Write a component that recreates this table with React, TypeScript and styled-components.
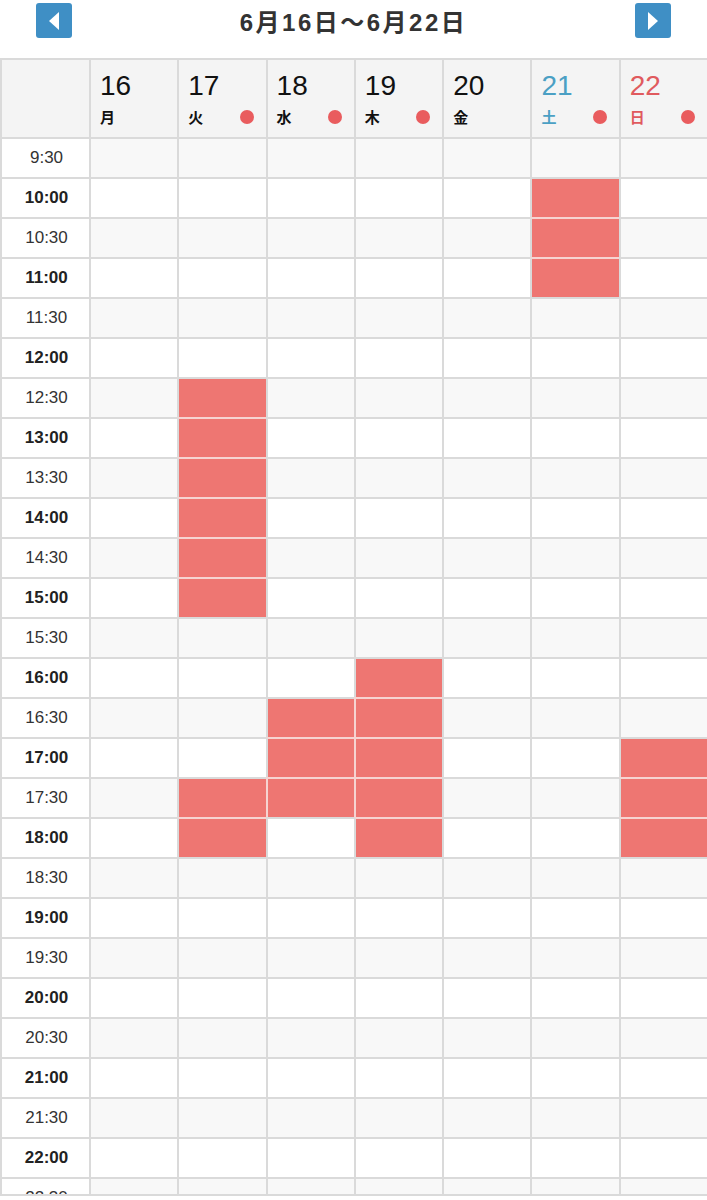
import React from "react";
import styled, { createGlobalStyle } from "styled-components";

const GlobalStyle = createGlobalStyle`
  html, body { margin: 0; padding: 0; background: #ffffff; }
  body { font-family: "Liberation Sans", "Noto Sans CJK JP", sans-serif; color: #222; }
  * { box-sizing: border-box; }
`;

const LINE = "#dadada";
const RED = "#ee7672";
const RED_LINE = "#f6d3d1";

const Page = styled.div`
  width: 707px;
`;

const TopBar = styled.div`
  height: 58px;
  display: flex;
  align-items: flex-start;
  justify-content: space-between;
  padding: 3px 36px 0 36px;
`;

const NavButton = styled.button`
  width: 36px;
  height: 35px;
  border: none;
  border-radius: 3px;
  background: #3f8fc5;
  padding: 0;
  display: flex;
  align-items: center;
  justify-content: center;
  cursor: pointer;
`;

const Title = styled.h1`
  margin: 0;
  padding-top: 5px;
  font-family: "Liberation Sans", "Noto Sans CJK JP", sans-serif;
  font-weight: 700;
  font-size: 24px;
  line-height: 30px;
  color: #333;
  letter-spacing: 2.5px;
`;

const Table = styled.div`
  height: 1138px;
  overflow: hidden;
  border-top: 2px solid ${LINE};
  border-bottom: 2px solid ${LINE};
`;

const Row = styled.div<{ $header?: boolean }>`
  display: grid;
  grid-template-columns: 89px repeat(7, 1fr);
  height: ${(p) => (p.$header ? "77px" : "40px")};
`;

const Corner = styled.div`
  background: #f4f4f4;
  border-left: 2px solid ${LINE};
`;

const DayHead = styled.div<{ $color: string }>`
  background: #f4f4f4;
  border-left: 2px solid ${LINE};
  padding: 10px 12px 0 9px;
  display: flex;
  flex-direction: column;
  color: ${(p) => p.$color};
`;

const DayNum = styled.div`
  font-family: "Liberation Sans", sans-serif;
  font-size: 28px;
  line-height: 32px;
  font-weight: 400;
`;

const DayNameRow = styled.div`
  display: flex;
  align-items: center;
  justify-content: space-between;
  margin-top: 6px;
  height: 18px;
`;

const DayName = styled.span`
  font-family: "Noto Sans CJK JP", sans-serif;
  font-size: 15px;
  font-weight: 700;
  line-height: 18px;
`;

const Dot = styled.span`
  width: 14px;
  height: 14px;
  border-radius: 50%;
  background: #e95c5e;
`;

const TimeCell = styled.div<{ $bold: boolean }>`
  background: #ffffff;
  border-left: 2px solid ${LINE};
  border-top: 2px solid ${LINE};
  display: flex;
  align-items: center;
  justify-content: center;
  font-family: "Liberation Sans", sans-serif;
  font-size: 17px;
  font-weight: ${(p) => (p.$bold ? 700 : 400)};
  color: ${(p) => (p.$bold ? "#222" : "#333")};
  padding-left: 2px;
`;

const SlotCell = styled.div<{
  $shade: boolean;
  $busy: boolean;
  $topRed: boolean;
  $leftRed: boolean;
}>`
  background: ${(p) => (p.$busy ? RED : p.$shade ? "#f8f8f8" : "#ffffff")};
  border-left: 2px solid ${(p) => (p.$busy && p.$leftRed ? RED_LINE : LINE)};
  border-top: 2px solid ${(p) => (p.$busy && p.$topRed ? RED_LINE : LINE)};
`;

const days = [
  { num: "16", name: "月", color: "#111", dot: false },
  { num: "17", name: "火", color: "#111", dot: true },
  { num: "18", name: "水", color: "#111", dot: true },
  { num: "19", name: "木", color: "#111", dot: true },
  { num: "20", name: "金", color: "#111", dot: false },
  { num: "21", name: "土", color: "#4ba0c4", dot: true },
  { num: "22", name: "日", color: "#e05a5e", dot: true },
];

const times: string[] = [];
for (let h = 9; h <= 22; h++) {
  if (h > 9) times.push(`${h}:00`);
  times.push(`${h}:30`);
}

const busyMap: Record<number, number[]> = {
  1: [6, 7, 8, 9, 10, 11, 16, 17],
  2: [14, 15, 16],
  3: [13, 14, 15, 16, 17],
  5: [1, 2, 3],
  6: [15, 16, 17],
};

const isBusy = (day: number, row: number) =>
  day >= 0 && row >= 0 && (busyMap[day] || []).includes(row);

const Arrow = ({ dir }: { dir: "left" | "right" }) => (
  <svg width="12" height="18" viewBox="0 0 12 18">
    {dir === "left" ? (
      <polygon points="11,0 11,18 1,9" fill="#fff" />
    ) : (
      <polygon points="1,0 1,18 11,9" fill="#fff" />
    )}
  </svg>
);

export default function App() {
  return (
    <Page>
      <GlobalStyle />
      <TopBar>
        <NavButton aria-label="prev">
          <Arrow dir="left" />
        </NavButton>
        <Title>6月16日〜6月22日</Title>
        <NavButton aria-label="next">
          <Arrow dir="right" />
        </NavButton>
      </TopBar>
      <Table>
        <Row $header>
          <Corner />
          {days.map((d) => (
            <DayHead key={d.num} $color={d.color}>
              <DayNum>{d.num}</DayNum>
              <DayNameRow>
                <DayName>{d.name}</DayName>
                {d.dot && <Dot />}
              </DayNameRow>
            </DayHead>
          ))}
        </Row>
        {times.map((t, r) => (
          <Row key={t}>
            <TimeCell $bold={t.endsWith(":00")}>{t}</TimeCell>
            {days.map((d, di) => (
              <SlotCell
                key={d.num}
                $shade={r % 2 === 0}
                $busy={isBusy(di, r)}
                $topRed={isBusy(di, r - 1)}
                $leftRed={isBusy(di - 1, r)}
              />
            ))}
          </Row>
        ))}
      </Table>
    </Page>
  );
}
